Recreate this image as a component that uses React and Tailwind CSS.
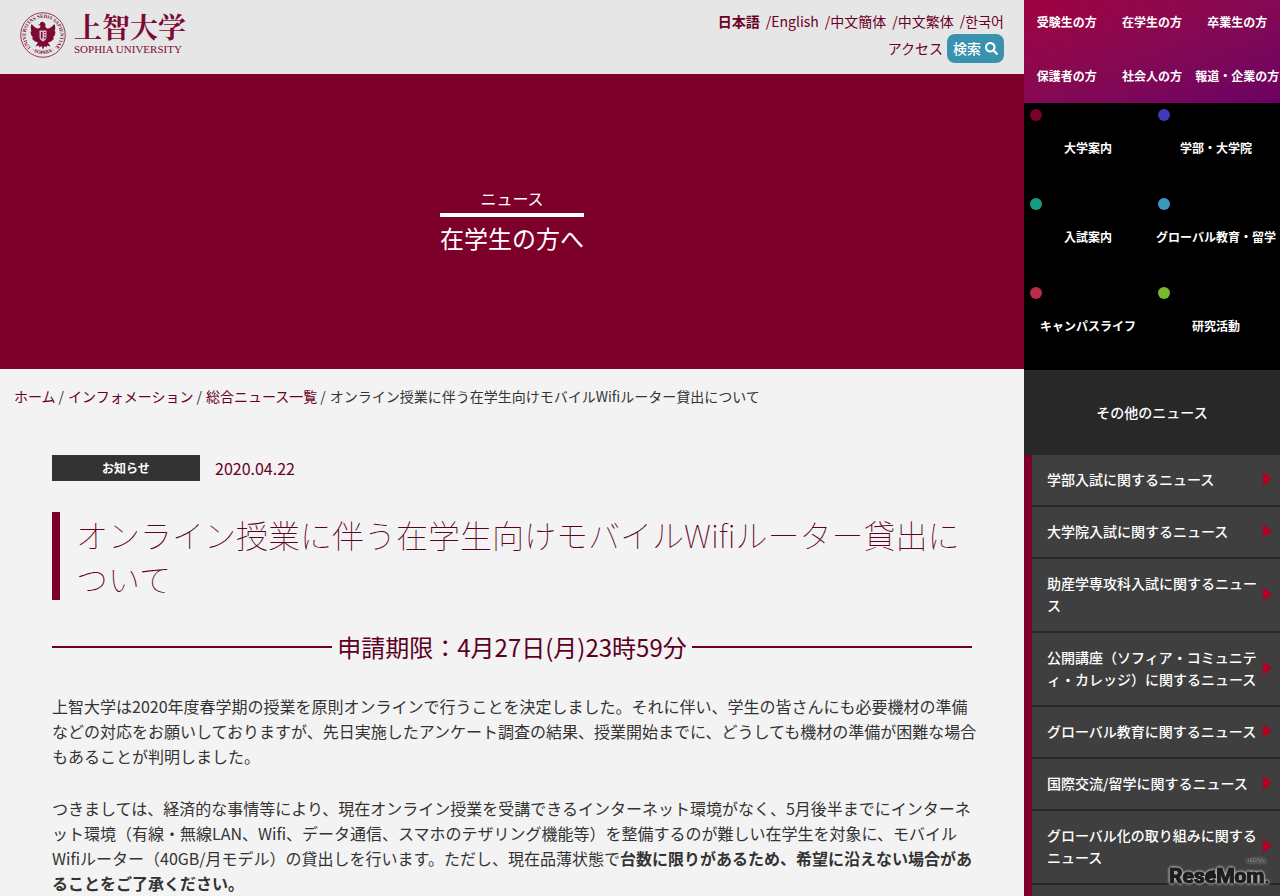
import { FaSearch } from "react-icons/fa";

const languages = [
  { label: "日本語", lang: "ja", current: true },
  { label: "English", lang: "en" },
  { label: "中文簡体", lang: "ja" },
  { label: "中文繁体", lang: "ja" },
  { label: "한국어", lang: "ko" },
];

const audiences = [
  "受験生の方",
  "在学生の方",
  "卒業生の方",
  "保護者の方",
  "社会人の方",
  "報道・企業の方",
];

const categories = [
  { label: "大学案内", dot: "bg-[#7c0029]" },
  { label: "学部・大学院", dot: "bg-[#4338b5]" },
  { label: "入試案内", dot: "bg-[#189b85]" },
  { label: "グローバル教育・留学", dot: "bg-[#3c97ba]" },
  { label: "キャンパスライフ", dot: "bg-[#b92c46]" },
  { label: "研究活動", dot: "bg-[#78b92c]" },
];

const otherNews = [
  "学部入試に関するニュース",
  "大学院入試に関するニュース",
  "助産学専攻科入試に関するニュース",
  "公開講座（ソフィア・コミュニティ・カレッジ）に関するニュース",
  "グローバル教育に関するニュース",
  "国際交流/留学に関するニュース",
  "グローバル化の取り組みに関するニュース",
];

const crumbs = ["ホーム", "インフォメーション", "総合ニュース一覧"];

function Seal() {
  return (
    <svg viewBox="0 0 92 92" className="h-[46px] w-[46px] shrink-0" aria-hidden="true">
      <defs>
        <path id="seal-top" d="M20.6 69.4 A34.5 34.5 0 1 1 71.4 69.4" />
        <path id="seal-bottom" d="M19 73 A38.5 38.5 0 0 0 73 73" />
      </defs>
      <circle cx="46" cy="46" r="44.5" fill="none" stroke="currentColor" strokeWidth="1.6" />
      <g fill="currentColor" fontFamily="'Liberation Serif', serif" fontWeight="700" fontSize="10">
        <text>
          <textPath href="#seal-top" startOffset="50%" textAnchor="middle">
            UNIVERSITAS SEDIS SAPIENTIAE
          </textPath>
        </text>
        <text>
          <textPath href="#seal-bottom" startOffset="50%" textAnchor="middle">
            · SOPHIA ·
          </textPath>
        </text>
      </g>
      <path
        fill="currentColor"
        d="M46 20c-3-1-6 1-6 4l-4 2 5 1c0 3-1 5-4 6-5 0-9-4-14-9-2 5-2 10 0 15l-2 0c0 5 2 9 5 12l-2 1c2 4 5 7 9 8l3 1-5 8 7-2 1 4 4-3 3 7 3-7 4 3 1-4 7 2-5-8 3-1c4-1 7-4 9-8l-2-1c3-3 5-7 5-12l-2 0c2-5 2-10 0-15-5 5-9 9-14 9-4-1-5-4-4-8-1-3-3-5-5-5z"
      />
      <path d="M39 37h14v13c0 5-3 7-7 9-4-2-7-4-7-9z" fill="#d9b9c6" />
      <path d="M42 40h3v13h-3zM48 40h3v2h-3zM48 45h3v2h-3zM48 50h3v3h-3z" fill="currentColor" />
    </svg>
  );
}

function Watermark() {
  return (
    <div className="pointer-events-none absolute right-2 bottom-2">
      <svg
        width="108"
        height="32"
        viewBox="0 0 108 32"
        role="img"
        aria-label="ReseMom"
        className="[filter:drop-shadow(0_0_1px_#c4c4c4)_drop-shadow(0_0_1px_#c4c4c4)]"
      >
        <text
          x="5"
          y="27"
          fill="#1d1d1d"
          stroke="#1d1d1d"
          strokeWidth="1"
          strokeLinejoin="round"
          fontFamily="Roboto, sans-serif"
          fontWeight="800"
          fontSize="21"
        >
          ReseMom
        </text>
        <path d="M42 23c-2-6 2-9 9-9 0 6-3 9-7 9z" fill="#1d1d1d" />
        <circle cx="103" cy="26" r="1.5" fill="#1d1d1d" />
        <text x="82" y="6" fontSize="5" fill="#1d1d1d" fontFamily="'Noto Sans CJK JP', sans-serif">
          リセマム
        </text>
      </svg>
    </div>
  );
}

function Header() {
  return (
    <header className="flex h-[74px] justify-between bg-[#e6e6e6] px-5 text-[#6b0026]">
      <a href="#" className="flex items-center gap-2 pb-1 text-[#7c0a35]">
        <Seal />
        <span className="flex flex-col">
          <span className="font-['Noto_Serif_CJK_JP','Noto_Sans_CJK_JP',serif] text-[28px] leading-[28px] font-bold">
            上智大学
          </span>
          <span className="font-['Liberation_Serif',serif] text-[11px] leading-[18px] whitespace-nowrap">
            SOPHIA UNIVERSITY
          </span>
        </span>
      </a>
      <div className="flex flex-col items-end pt-2 text-[14px]">
        <ul className="flex gap-1.5 leading-[26px]">
          {languages.map((item, i) => (
            <li key={item.label} lang={item.lang} className={item.current ? "font-bold" : ""}>
              {i > 0 && "/"}
              <a href="#">{item.label}</a>
            </li>
          ))}
        </ul>
        <div className="flex items-center gap-1">
          <a href="#">アクセス</a>
          <button
            type="button"
            className="flex h-[29px] items-center gap-1 rounded-lg bg-[#3993af] px-1.5 font-medium text-white"
          >
            検索
            <FaSearch size={13} />
          </button>
        </div>
      </div>
    </header>
  );
}

function Sidebar() {
  return (
    <aside className="w-1/5 bg-[#282828] text-white">
      <nav className="grid grid-cols-3 gap-y-2.5 bg-linear-to-br from-[#a0003f] to-[#6c0063] pb-[5px] text-center text-[12px] leading-[44px] font-bold">
        {audiences.map((label) => (
          <a key={label} href="#" className="whitespace-nowrap">
            {label}
          </a>
        ))}
      </nav>

      <nav className="grid grid-cols-2 bg-black text-[12px] leading-[18px] font-bold">
        {categories.map((cat) => (
          <a key={cat.label} href="#" className="flex h-[89px] flex-col gap-[18px] pt-1.5">
            <span className={`ml-1.5 h-3 w-3 rounded-full ${cat.dot}`} />
            <span className="text-center whitespace-nowrap">{cat.label}</span>
          </a>
        ))}
      </nav>

      <h2 className="py-8 text-center text-[14px] leading-[21px] font-medium">その他のニュース</h2>
      <ul className="text-[14px] leading-[22px] font-medium">
        {otherNews.map((label) => (
          <li key={label} className="border-l-8 border-[#7c0029]">
            <a
              href="#"
              className="flex items-center justify-between border-b-2 border-[#282828] bg-[#3f3f3f] pt-[13px] pr-2 pb-[15px] pl-[15px]"
            >
              <span className="w-[212px]">{label}</span>
              <svg width="9" height="14" viewBox="0 0 9 14" className="shrink-0" aria-hidden="true">
                <path d="M0 0L9 7L0 14z" fill="#b4001e" />
              </svg>
            </a>
          </li>
        ))}
        <li className="h-12 border-l-8 border-[#7c0029] bg-[#3f3f3f]" />
      </ul>
    </aside>
  );
}

function Article() {
  return (
    <article className="px-[52px] pt-[47px]">
      <div className="flex items-center gap-[15px]">
        <span className="w-[148px] bg-[#333] text-center text-[12px] leading-[26px] font-bold text-white">
          お知らせ
        </span>
        <time dateTime="2020-04-22" className="text-[16px] leading-[26px] text-[#6b0026]">
          2020.04.22
        </time>
      </div>

      <h1 className="mt-[31px] border-l-8 border-[#7c0029] pl-4 text-[32px] leading-[44px] font-thin text-[#5c0022]">
        オンライン授業に伴う在学生向けモバイルWifiルーター貸出について
      </h1>

      <h2 className="mt-[29px] flex items-center gap-[5px] text-[24px] leading-[36px] text-[#5c0022]">
        <span className="h-0.5 flex-1 bg-[#6b0026]" />
        申請期限：4月27日(月)23時59分
        <span className="h-0.5 flex-1 bg-[#6b0026]" />
      </h2>

      <div className="mt-[29px] -mr-2 flex flex-col gap-[27px] text-[16px] leading-[25px] text-[#333]">
        <p>
          上智大学は2020年度春学期の授業を原則オンラインで行うことを決定しました。それに伴い、学生の皆さんにも必要機材の準備などの対応をお願いしておりますが、先日実施したアンケート調査の結果、授業開始までに、どうしても機材の準備が困難な場合もあることが判明しました。
        </p>
        <p>
          つきましては、経済的な事情等により、現在オンライン授業を受講できるインターネット環境がなく、5月後半までにインターネット環境（有線・無線LAN、Wifi、データ通信、スマホのテザリング機能等）を整備するのが難しい在学生を対象に、モバイルWifiルーター（40GB/月モデル）の貸出しを行います。ただし、現在品薄状態で
          <strong>台数に限りがあるため、希望に沿えない場合があることをご了承ください。</strong>
        </p>
      </div>
    </article>
  );
}

export default function App() {
  return (
    <div
      lang="ja"
      className="relative flex h-screen overflow-hidden bg-[#f3f3f3] font-['Noto_Sans_CJK_JP','Noto_Sans_CJK_KR',sans-serif]"
    >
      <main className="w-4/5">
        <Header />
        <div className="flex h-[295px] flex-col items-center justify-center bg-[#7c0029] pb-0.5 text-white">
          <div className="text-center">
            <p className="border-b-4 border-white pb-[3px] text-[16px] leading-[24px]">ニュース</p>
            <p className="pt-[3px] text-[24px] leading-[36px]">在学生の方へ</p>
          </div>
        </div>

        <nav className="px-3.5 pt-[15px] text-[14px] leading-[24px] text-[#333]">
          <ol className="flex gap-1">
            {crumbs.map((label) => (
              <li key={label}>
                <a href="#" className="mr-[3px] text-[#6b0026]">
                  {label}
                </a>
                /
              </li>
            ))}
            <li>オンライン授業に伴う在学生向けモバイルWifiルーター貸出について</li>
          </ol>
        </nav>

        <Article />
      </main>
      <Sidebar />
      <Watermark />
    </div>
  );
}
